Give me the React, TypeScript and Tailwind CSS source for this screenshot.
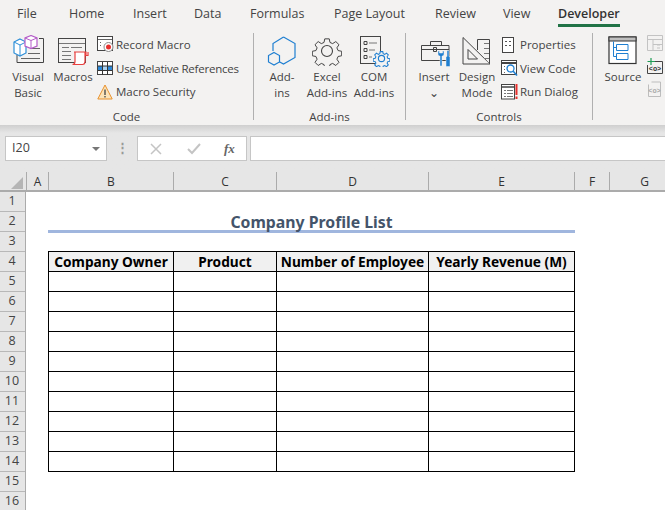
const tabs = [
	["File", "ml-[17px] w-[52px]"],
	["Home", "w-[64px]"],
	["Insert", "w-[61px]"],
	["Data", "w-[56px]"],
	["Formulas", "w-[84px]"],
	["Page Layout", "w-[101px]"],
	["Review", "w-[68px]"],
	["View", "w-[55px]"],
];

const columns = [
	["A", "w-[22px]"],
	["B", "w-[125px]"],
	["C", "w-[103px]"],
	["D", "w-[152px]"],
	["E", "w-[146px]"],
	["F", "w-[35px]"],
	["G", "w-[70px]"],
];

const rowNumbers = Array.from({ length: 16 }, (_, i) => i + 1);
const emptyRows = Array.from({ length: 10 }, (_, i) => i);

function VisualBasicIcon() {
	return (
		<svg className="ml-[2px]" width="32" height="34" viewBox="0 0 32 34" fill="none">
			<path d="M26 3.500h4.500v24H4V20" stroke="#444" />
			<path d="M8 23.500h19M15 18.500h12M18 13.500h9" stroke="#666" />
			<path d="M7 4l6 3v11l-6 3-6-3V7z" fill="#fff" stroke="#2e8fd8" strokeWidth="1.200" />
			<path d="M1 7l6 3 6-3M7 10v11" stroke="#2e8fd8" />
			<path d="M18 0.500l6 2.500v8L18 13.500 12 11V3z" fill="#fff" stroke="#b45cc8" strokeWidth="1.200" />
			<path d="M12 3l6 2.500L24 3M18 5.500v8" stroke="#b45cc8" />
		</svg>
	);
}

function MacrosIcon() {
	return (
		<svg width="32" height="34" viewBox="0 0 32 34" fill="none">
			<rect x="1.500" y="3.500" width="27" height="24" stroke="#444" />
			<path d="M2 8.500h26M5 12.500h7M14 12.500h11M5 16.500h9M5 20.500h9M5 24.500h9" stroke="#777" />
			<path d="M17 17h12v3.500h2V17M18 17.500v9c0 2-1 3-2.500 3h10c1.500 0 2.500-1 2.500-3v-9" fill="#fff" stroke="#e8403f" strokeWidth="1.200" />
		</svg>
	);
}

function RecordMacroIcon() {
	return (
		<svg width="17" height="17" viewBox="0 0 17 17" fill="none">
			<rect x="0.500" y="0.500" width="15" height="14" fill="#fff" stroke="#444" />
			<path d="M1 3.500h14M3 6.500h1M3 9.500h1" stroke="#666" />
			<circle cx="11.500" cy="11" r="4.500" fill="#fff" stroke="#888" />
			<circle cx="11.500" cy="11" r="2.500" fill="#e8302e" />
		</svg>
	);
}

function RelativeIcon() {
	return (
		<svg width="17" height="15" viewBox="0 0 17 15" fill="none">
			<rect x="0.500" y="0.500" width="15" height="13" fill="#fff" stroke="#444" />
			<path d="M1 5h4.500v4H1zM10.500 5H15v4h-4.500z" fill="#2b88d8" />
			<path d="M6 5h4v4H6z" fill="#a9d2f2" />
			<path d="M5.500 1v13M10.500 1v13M1 5h14M1 9.500h14" stroke="#333" />
		</svg>
	);
}

function SecurityIcon() {
	return (
		<svg width="16" height="16" viewBox="0 0 16 16" fill="none">
			<path d="M8 1L15.200 15H0.800z" fill="#fce4b8" stroke="#e8912d" />
			<path d="M8 5.500v5.500M8 12v1.500" stroke="#444" strokeWidth="1.300" />
		</svg>
	);
}

function AddInsIcon() {
	return (
		<svg className="mb-[3px]" width="30" height="30" viewBox="0 0 30 30" fill="none" stroke="#1f7fd1" strokeWidth="1.200">
			<path d="M16.500 1L28 7.500v14L16.500 28 10 24.500M6 15V7.500L16.500 1" />
			<path d="M7 16.500l5.500 3v6.500L7 29l-5.500-3v-6.500z" fill="#f3f2f1" />
		</svg>
	);
}

function Gear({ size, color }: { size: number; color: string }) {
	return (
		<svg width={size} height={size} viewBox="0 0 30 30" fill="#f3f2f1" stroke={color} strokeWidth={size < 20 ? 2 : 1.1}>
			<path d="M12.500 1.500h5l.8 4 3 1.300 3.500-2.300 3.500 3.500-2.300 3.500 1.300 3 4 .8v5l-4 .8-1.300 3 2.300 3.500-3.500 3.500-3.500-2.300-3 1.300-.8 4h-5l-.8-4-3-1.300-3.500 2.300-3.500-3.500 2.300-3.500-1.300-3-4-.8v-5l4-.8 1.300-3-2.300-3.500 3.500-3.500 3.500 2.300 3-1.300z" transform="translate(1.500 1.500) scale(0.9)" />
			<circle cx="15" cy="15" r="5.500" />
		</svg>
	);
}

function ComIcon() {
	return (
		<svg width="32" height="30" viewBox="0 0 32 30" fill="none">
			<rect x="2.500" y="0.500" width="20" height="27" stroke="#444" />
			<path d="M6 5.500h3v3H6zM6 12.500h3v3H6zM6 19.500h3v3H6z" stroke="#444" />
			<path d="M11 7h8M11 14h6M11 21h3" stroke="#777" />
		</svg>
	);
}

function InsertIcon() {
	return (
		<svg className="mb-[2px]" width="34" height="30" viewBox="0 0 34 30" fill="none">
			<path d="M13.500 8V4.500h11V8" stroke="#444" />
			<path d="M4.500 8.500h27.500v15H4.500z" stroke="#444" />
			<path d="M5 12.500h27M16.500 10.500h3v4h-3z" stroke="#444" fill="#f3f2f1" />
			<path d="M21 14v3c0 1.500 1 2 2 2v10h2V19c1 0 2-.5 2-2v-3h-1.500v2h-3v-2z" fill="#1f7fd1" stroke="#f3f2f1" strokeWidth="0.500" />
			<path d="M30 13.500h2v6h1v10h-4v-10h1z" fill="#1f7fd1" stroke="#f3f2f1" strokeWidth="0.500" />
		</svg>
	);
}

function DesignIcon() {
	return (
		<svg className="mb-[3px]" width="30" height="30" viewBox="0 0 30 30" fill="none" stroke="#444">
			<path d="M1 1.500v26.500h27z" />
			<path d="M6 13.500v9.500h9.500z" />
			<path d="M15.500 14V3.500h12v24" fill="#f3f2f1" />
			<path d="M22 7.500h5M22 12.500h5M22 17.500h5M22 22.500h5" stroke="#777" />
		</svg>
	);
}

function PropertiesIcon() {
	return (
		<svg width="14" height="16" viewBox="0 0 14 16" fill="none">
			<rect x="1.500" y="0.500" width="11" height="15" fill="#fff" stroke="#444" />
			<path d="M4 4.500h2M8 4.500h2M4 8.500h2M8 8.500h2" stroke="#555" />
		</svg>
	);
}

function ViewCodeIcon() {
	return (
		<svg width="17" height="17" viewBox="0 0 17 17" fill="none">
			<rect x="0.500" y="0.500" width="15" height="14" fill="#fff" stroke="#444" />
			<path d="M1 3h14" stroke="#444" strokeWidth="2" />
			<path d="M3 6.500h1M3 9.500h1M3 12.500h1" stroke="#666" />
			<circle cx="9.500" cy="8.500" r="3.500" fill="#fff" stroke="#1f7fd1" strokeWidth="1.300" />
			<path d="M12 11l4 4.500" stroke="#1f7fd1" strokeWidth="1.600" />
		</svg>
	);
}

function RunDialogIcon() {
	return (
		<svg width="17" height="16" viewBox="0 0 17 16" fill="none">
			<rect x="0.500" y="0.500" width="13" height="14.500" fill="#fff" stroke="#444" />
			<path d="M1 3h13" stroke="#444" strokeWidth="1.500" />
			<path d="M3 6.500h2M6 6.500h6M3 9.500h2M6 9.500h6M3 12.500h2M6 12.500h6" stroke="#777" />
			<path d="M15.500 0v11M15.500 12.500v2.500" stroke="#e8302e" strokeWidth="2" />
		</svg>
	);
}

function SourceIcon() {
	return (
		<svg className="mb-[3px]" width="30" height="30" viewBox="0 0 30 30" fill="none">
			<rect x="1" y="1" width="27" height="26.500" fill="#fff" stroke="#333" strokeWidth="1.200" />
			<rect x="1" y="1" width="27" height="4" fill="#bfbfbf" stroke="#333" />
			<path d="M5.500 5.500v15h3M5.500 11.500h3" stroke="#1f7fd1" />
			<path d="M8.500 8.500h11.500v6H8.500zM8.500 17.500h11.500v6H8.500z" stroke="#1f7fd1" />
		</svg>
	);
}

function XmlTopIcon() {
	return (
		<svg width="17" height="16" viewBox="0 0 17 16" fill="none" stroke="#c3c3c3">
			<path d="M0.500 0.500h15v15h-15zM1 4.500h14M6 4.500v11M6 9.500h9M10 10h3M10 13h3" />
		</svg>
	);
}

function XmlMiddleIcon() {
	return (
		<svg width="17" height="16" viewBox="0 0 17 16" fill="none">
			<path d="M4 0v7M0.500 3.500H8" stroke="#1f9d55" strokeWidth="1.200" />
			<path d="M8 3.500h7.500v12h-15V7" stroke="#444" />
			<text x="8" y="13" fontSize="7" fill="#333" textAnchor="middle" fontFamily="'Liberation Mono', monospace" fontWeight="700">&lt;o&gt;</text>
		</svg>
	);
}

function XmlBottomIcon() {
	return (
		<svg width="17" height="16" viewBox="0 0 17 16" fill="none">
			<path d="M1.500 3.500V15.500h12V1h-9" stroke="#bdbdbd" />
			<text x="7.500" y="12" fontSize="7" fill="#aaa" textAnchor="middle" fontFamily="'Liberation Mono', monospace" fontWeight="700">&lt;o&gt;</text>
		</svg>
	);
}

function LargeButton({ icon, lines, width }: { icon: React.ReactNode; lines: string[]; width: string }) {
	return (
		<div className={`${width} flex flex-col items-center shrink-0`}>
			<div className="h-[38px] flex items-end justify-center">{icon}</div>
			<div className="text-center leading-[16px] whitespace-nowrap">
				{lines.map((line) => (
					<div key={line}>{line}</div>
				))}
			</div>
		</div>
	);
}

function SmallButton({ icon, label, tight }: { icon: React.ReactNode; label: string; tight?: boolean }) {
	return (
		<div className="h-[23.500px] flex items-center">
			<div className="w-[19px] shrink-0">{icon}</div>
			<span className={tight ? "whitespace-nowrap tracking-[-0.220px]" : "whitespace-nowrap"}>{label}</span>
		</div>
	);
}

function Group({ label, width, children }: { label: string; width: string; children: React.ReactNode }) {
	return (
		<div className={`${width} shrink-0 flex flex-col border-r border-[#b0b0b0] h-[87px]`}>
			<div className="flex shrink-0 h-[79px] -mt-[2px]">{children}</div>
			<div className="text-center leading-[16px] -mt-[1px]">{label}</div>
		</div>
	);
}

function App() {
	return (
		<div className="w-[665px] h-[510px] overflow-hidden bg-white font-['Open_Sans',sans-serif] text-[12px] text-[#444]">
			{/* Tabs */}
			<div className="bg-[#f3f2f1] h-[28px] pt-[1px] flex items-center text-[12.500px]">
				{tabs.map(([name, width]) => (
					<div key={name} className={width}>
						{name}
					</div>
				))}
				<div className="relative font-semibold text-[#333]">
					Developer
					<div className="absolute left-0 right-0 top-[19px] h-[3px] bg-[#217346]" />
				</div>
			</div>

			{/* Ribbon */}
			<div className="bg-[#f3f2f1] h-[97px] pt-[5px] flex overflow-hidden text-[11.500px]">
				<Group label="Code" width="w-[254px]">
					<LargeButton icon={<VisualBasicIcon />} lines={["Visual", "Basic"]} width="ml-[5px] w-[46px]" />
					<LargeButton icon={<MacrosIcon />} lines={["Macros"]} width="w-[44px]" />
					<div className="ml-[2px] pt-[2px]">
						<SmallButton icon={<RecordMacroIcon />} label="Record Macro" />
						<SmallButton icon={<RelativeIcon />} label="Use Relative References" tight />
						<SmallButton icon={<SecurityIcon />} label="Macro Security" />
					</div>
				</Group>
				<Group label="Add-ins" width="w-[152px]">
					<LargeButton icon={<AddInsIcon />} lines={["Add-", "ins"]} width="ml-[7px] w-[42px]" />
					<LargeButton
						icon={
							<div className="mb-[3px]">
								<Gear size={30} color="#444" />
							</div>
						}
						lines={["Excel", "Add-ins"]}
						width="w-[48px]"
					/>
					<LargeButton
						icon={
							<div className="relative mb-[3px]">
								<ComIcon />
								<div className="absolute right-[0px] bottom-[-1px]">
									<Gear size={17} color="#1f7fd1" />
								</div>
							</div>
						}
						lines={["COM", "Add-ins"]}
						width="w-[46px]"
					/>
				</Group>
				<Group label="Controls" width="w-[187px]">
					<div className="ml-[7px]">
						<LargeButton icon={<InsertIcon />} lines={["Insert", "⌄"]} width="w-[42px]" />
					</div>
					<LargeButton icon={<DesignIcon />} lines={["Design", "Mode"]} width="w-[44px]" />
					<div className="ml-[2px] pt-[2px]">
						<SmallButton icon={<PropertiesIcon />} label="Properties" />
						<SmallButton icon={<ViewCodeIcon />} label="View Code" />
						<SmallButton icon={<RunDialogIcon />} label="Run Dialog" />
					</div>
				</Group>
				<div className="flex h-[79px] -mt-[2px]">
					<LargeButton icon={<SourceIcon />} lines={["Source"]} width="ml-[8px] w-[44px]" />
					<div className="ml-[2px] pt-[4px] flex flex-col gap-[7px]">
						<XmlTopIcon />
						<XmlMiddleIcon />
						<XmlBottomIcon />
					</div>
				</div>
			</div>

			{/* Formula bar */}
			<div className="h-[47px] bg-[#e6e6e6] bg-gradient-to-b from-[#cfcfcf] to-[#e6e6e6] to-[8px] pt-[11px] flex text-[12.500px]">
				<div className="ml-[5px] w-[102px] h-[25px] bg-white border border-[#c6c6c6] flex items-center justify-between pl-[6px] pr-[6px]">
					<span>I20</span>
					<span className="w-0 h-0 border-x-[4px] border-x-transparent border-t-[4px] border-t-[#777]" />
				</div>
				<div className="w-[30px] h-[25px] flex items-center justify-center text-[#999] font-bold">⋮</div>
				<div className="w-[110px] h-[25px] bg-white border border-[#c6c6c6] flex items-center text-[#bbb]">
					<svg className="ml-[12px]" width="12" height="12" viewBox="0 0 12 12" fill="none" stroke="#c4c4c4" strokeWidth="1.500">
						<path d="M1 1l10 10M11 1L1 11" />
					</svg>
					<svg className="ml-[25px]" width="14" height="12" viewBox="0 0 14 12" fill="none" stroke="#c4c4c4" strokeWidth="2">
						<path d="M1 6l4 4 8-9" />
					</svg>
					<span className="ml-[23px] font-['Liberation_Serif',serif] italic font-bold text-[13px] text-[#666]">fx</span>
				</div>
				<div className="ml-[3px] flex-1 h-[25px] bg-white border-y border-l border-[#c6c6c6]" />
			</div>

			{/* Column headers */}
			<div className="h-[20px] flex bg-[#e6e6e6] border-b-2 border-[#ababab] overflow-hidden">
				<div className="w-[26px] h-[18px] relative overflow-hidden shrink-0">
					<div className="absolute right-[3px] bottom-[1px] w-0 h-0 border-l-[12px] border-l-transparent border-b-[12px] border-b-[#b5b5b5]" />
				</div>
				{columns.map(([name, width]) => (
					<div key={name} className={`${width} shrink-0 h-[18px] flex items-end justify-center border-l border-[#ababab] leading-[16px] text-[12px] text-[#333]`}>
						{name}
					</div>
				))}
			</div>

			{/* Sheet */}
			<div className="flex">
				<div className="w-[26px] bg-[#e6e6e6] border-r border-[#ababab] text-[12.500px] shrink-0">
					{rowNumbers.map((n) => (
						<div key={n} className="h-[20px] border-b border-[#b8b8b8] flex items-center justify-center pr-[1px]">
							{n}
						</div>
					))}
				</div>
				<div className="pl-[22px] font-['Noto_Sans',sans-serif]">
					<div className="h-[20px]" />
					<div className="h-[21px] w-[527px] pt-[4px] border-b-[3px] border-[#a0b6de] flex items-center justify-center font-bold text-[15.800px] text-[#44546a]">
						Company Profile List
					</div>
					<div className="h-[18px]" />
					<table className="table-fixed border-collapse text-[13.700px] font-bold text-black">
						<tbody>
							<tr className="h-[20px] bg-[#f0f0f0]">
								<td className="w-[125px] border border-black text-center leading-none pt-[1px] whitespace-nowrap">Company Owner</td>
								<td className="w-[103px] border border-black text-center leading-none pt-[1px] whitespace-nowrap">Product</td>
								<td className="w-[152px] border border-black text-center leading-none pt-[1px] whitespace-nowrap">Number of Employee</td>
								<td className="w-[146px] border border-black text-center leading-none pt-[1px] whitespace-nowrap">Yearly Revenue (M)</td>
							</tr>
							{emptyRows.map((row) => (
								<tr key={row} className="h-[20px] bg-white">
									<td className="border border-black" />
									<td className="border border-black" />
									<td className="border border-black" />
									<td className="border border-black" />
								</tr>
							))}
						</tbody>
					</table>
				</div>
			</div>
		</div>
	);
}

export default App;
